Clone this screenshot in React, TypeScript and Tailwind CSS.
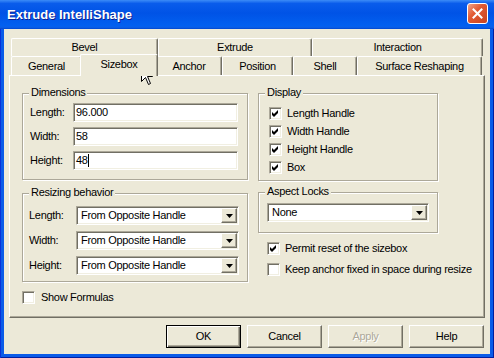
import React from 'react';

const font = "font-['Liberation_Sans',Arial,sans-serif] text-[11px] leading-[13px] tracking-[-0.3px] text-black";
const sunken =
  'border border-t-[#ACA899] border-l-[#ACA899] border-r-white border-b-white shadow-[inset_1px_1px_0_#716F64,inset_-1px_-1px_0_#F1EFE2]';
const raised =
  'border border-t-white border-l-white border-r-[#716F64] border-b-[#716F64] shadow-[inset_-1px_-1px_0_#ACA899]';

const Tab = ({ label, w, active }: { label: string; w: string; active?: boolean }) =>
  active ? (
    <div
      className={`${w} relative z-10 -mx-[2px] -mb-[1px] h-[22px] pb-[2px] flex items-center justify-center bg-[#ECE9D8] border-l border-t border-white border-r border-r-[#716F64] shadow-[inset_-1px_0_0_#ACA899] rounded-t-[2px]`}
    >
      {label}
    </div>
  ) : (
    <div
      className={`${w} h-full flex items-center justify-center border-l border-t border-white border-r border-r-[#716F64] shadow-[inset_-1px_0_0_#ACA899] rounded-t-[2px]`}
    >
      {label}
    </div>
  );

const Group = ({ title, className, children }: { title: string; className: string; children: React.ReactNode }) => (
  <div className={`relative border border-[#ACA899] shadow-[inset_1px_1px_0_#fff,1px_1px_0_#fff] ${className}`}>
    <span className="absolute -top-[8px] left-[6px] px-[2px] bg-[#ECE9D8]">{title}</span>
    {children}
  </div>
);

const Check = ({ checked }: { checked?: boolean }) => (
  <div className={`w-[13px] h-[13px] shrink-0 bg-white ${sunken}`}>
    {checked && (
      <svg width="11" height="11" viewBox="1 1 11 11">
        <polygon points="3,5 5,7 9,3 9,6 5,10 3,8" fill="#000" />
      </svg>
    )}
  </div>
);

const CheckRow = ({ label, checked }: { label: string; checked?: boolean }) => (
  <div className="flex items-center h-[18px] whitespace-nowrap">
    <Check checked={checked} />
    <span className="ml-[5px]">{label}</span>
  </div>
);

const Combo = ({ value, w }: { value: string; w: string }) => (
  <div className={`${w} h-[19px] bg-white flex items-center ${sunken} p-[1px]`}>
    <span className="flex-1 pl-[3px]">{value}</span>
    <div className={`w-[16px] h-full bg-[#ECE9D8] flex items-center justify-center ${raised}`}>
      <svg width="7" height="4" viewBox="0 0 7 4">
        <polygon points="0,0 7,0 3.5,4" fill="#000" />
      </svg>
    </div>
  </div>
);

const Field = ({ label, value, caret }: { label: string; value: string; caret?: boolean }) => (
  <div className="flex items-center h-[19px]">
    <span className="w-[50px] pl-[7px]">{label}</span>
    <div className={`w-[165px] h-full bg-white flex items-center pl-[2px] ${sunken}`}>
      <span>{value}</span>
      {caret && <span className="w-px h-[13px] bg-black" />}
    </div>
  </div>
);

const ComboRow = ({ label }: { label: string }) => (
  <div className="flex items-center h-[19px]">
    <span className="w-[53px] pl-[6px]">{label}</span>
    <Combo value="From Opposite Handle" w="w-[163px]" />
  </div>
);

const Btn = ({ label, def, disabled }: { label: string; def?: boolean; disabled?: boolean }) => (
  <div
    className={`w-[75px] h-[23px] flex items-center justify-center ${
      def
        ? 'border border-black shadow-[inset_1px_1px_0_#fff,inset_-1px_-1px_0_#716F64,inset_-2px_-2px_0_#ACA899]'
        : raised
    } ${disabled ? 'text-[#ACA899] [text-shadow:1px_1px_0_#fff]' : ''}`}
  >
    {label}
  </div>
);

export default function App() {
  return (
    <div
      className={`relative w-[494px] h-[358px] flex flex-col bg-[#0A5BE8] shadow-[inset_1px_0_0_#0831D9,inset_-1px_0_0_#001EA0,inset_0_-1px_0_#001EA0] ${font}`}
    >
      <div className="h-[29px] shrink-0 flex items-center justify-between pl-[7px] pr-[6px] bg-[linear-gradient(180deg,#3C8CF7_0%,#0A5CEB_12%,#0053E6_45%,#0260F0_88%,#0A5FE8_94%,#0046D0_100%)]">
        <span className="font-bold text-[13px] tracking-normal text-white [text-shadow:1px_1px_0_#0F1F8F]">Extrude IntelliShape</span>
        <div className="w-[21px] h-[21px] -mt-[3px] rounded-[3px] border border-white bg-[linear-gradient(135deg,#F0A48A_0%,#E25A33_40%,#C8431E_100%)] flex items-center justify-center">
          <svg width="11" height="11" viewBox="0 0 11 11">
            <path d="M1.5 1.5 L9.5 9.5 M9.5 1.5 L1.5 9.5" stroke="#fff" strokeWidth="2" strokeLinecap="square" />
          </svg>
        </div>
      </div>

      <div className="flex-1 mx-[4px] mb-[4px] bg-[#ECE9D8] pt-[9px] pl-[5px] pr-[5px] flex flex-col">
        <div className="w-[476px]">
          <div className="flex h-[18px] pl-[2px]">
            <Tab label="Bevel" w="w-[147px]" />
            <Tab label="Extrude" w="w-[154px]" />
            <Tab label="Interaction" w="w-[171px]" />
          </div>
          <div className="flex items-end h-[19px] pl-[2px]">
            <Tab label="General" w="w-[71px]" />
            <Tab label="Sizebox" w="w-[78px]" active />
            <Tab label="Anchor" w="w-[66px]" />
            <Tab label="Position" w="w-[71px]" />
            <Tab label="Shell" w="w-[64px]" />
            <Tab label="Surface Reshaping" w="w-[125px]" />
          </div>
          <div className={`h-[243px] pt-[17px] pl-[12px] flex gap-[10px] ${raised}`}>
            <div className="w-[226px] flex flex-col">
              <Group title="Dimensions" className="h-[87px] pt-[9px] flex flex-col gap-[5px]">
                <Field label="Length:" value="96.000" />
                <Field label="Width:" value="58" />
                <Field label="Height:" value="48" caret />
              </Group>
              <Group title="Resizing behavior" className="mt-[13px] h-[89px] pt-[12px] flex flex-col gap-[6px]">
                <ComboRow label="Length:" />
                <ComboRow label="Width:" />
                <ComboRow label="Height:" />
              </Group>
              <div className="mt-[9px] flex items-center">
                <Check />
                <span className="ml-[6px]">Show Formulas</span>
              </div>
            </div>
            <div className="w-[180px] flex flex-col">
              <Group title="Display" className="h-[88px] pt-[10px] pl-[10px] flex flex-col">
                <CheckRow label="Length Handle" checked />
                <CheckRow label="Width Handle" checked />
                <CheckRow label="Height Handle" checked />
                <CheckRow label="Box" checked />
              </Group>
              <Group title="Aspect Locks" className="mt-[11px] h-[41px] pt-[10px] pl-[8px]">
                <Combo value="None" w="w-[162px]" />
              </Group>
              <div className="mt-[6px] pl-[9px] flex flex-col gap-[3px]">
                <CheckRow label="Permit reset of the sizebox" checked />
                <CheckRow label="Keep anchor fixed in space during resize" />
              </div>
            </div>
          </div>
        </div>
        <div className="mt-[7px] flex justify-end gap-[6px] pr-[1px]">
          <Btn label="OK" def />
          <Btn label="Cancel" />
          <Btn label="Apply" disabled />
          <Btn label="Help" />
        </div>
      </div>

      <svg className="absolute left-[141px] top-[65px]" width="13" height="21" viewBox="0 0 13 21">
        <path d="M0.5 0.5 L0.5 16.5 L4.5 12.5 L7.5 19.5 L9.5 18.5 L6.5 11.5 L11.5 11.5 Z" fill="#fff" stroke="#000" strokeWidth="1" />
      </svg>
    </div>
  );
}
